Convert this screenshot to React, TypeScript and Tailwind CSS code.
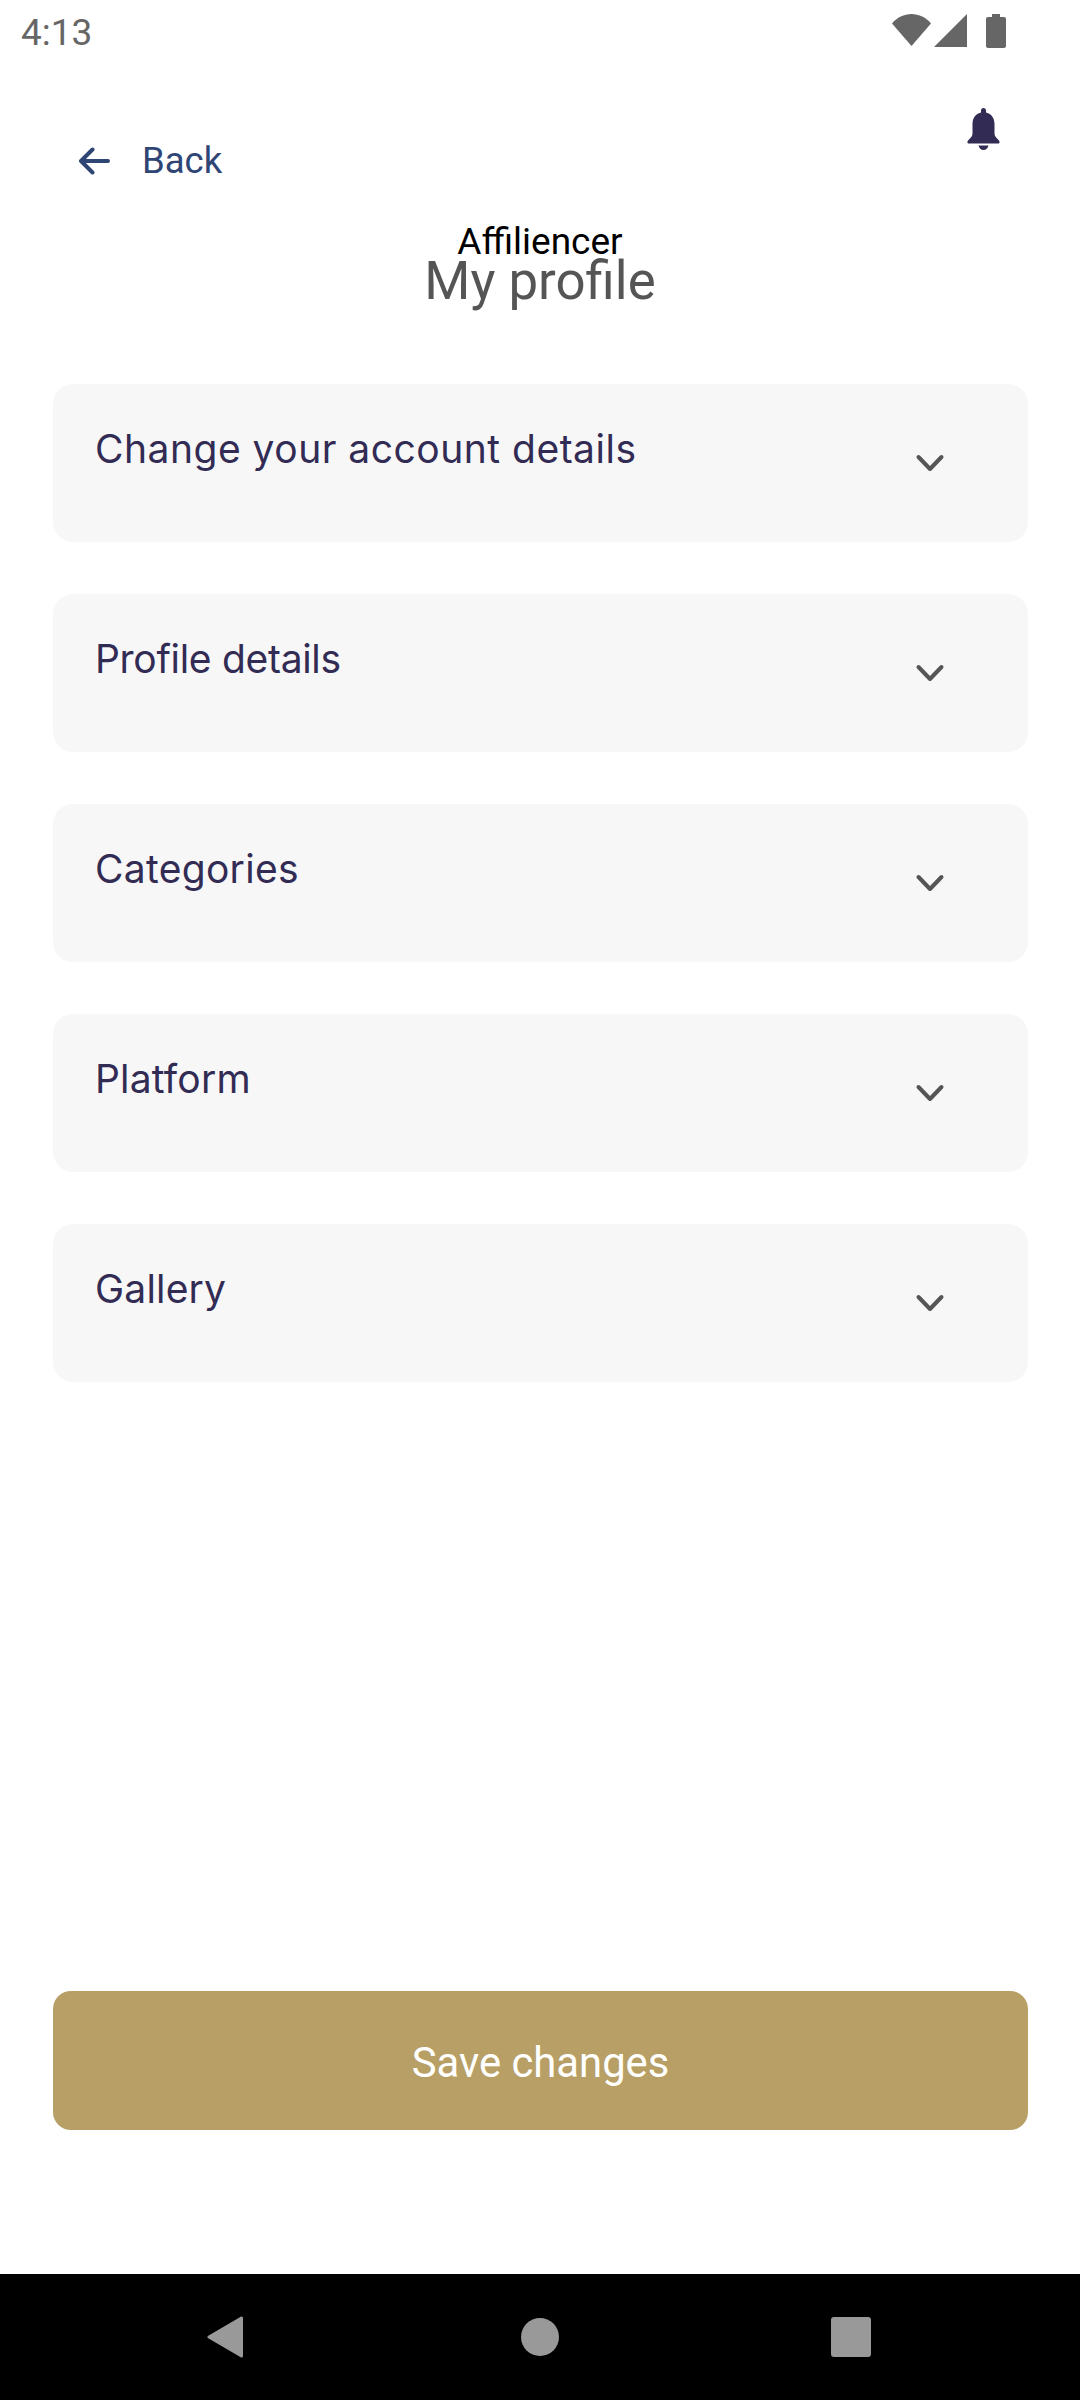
import React from 'react';

const sections = [
    { title: 'Change your account details', spacing: 'tracking-[0.5px]' },
    { title: 'Profile details', spacing: 'tracking-[-0.3px]' },
    { title: 'Categories', spacing: 'tracking-[0.3px]' },
    { title: 'Platform', spacing: 'tracking-[0.2px]' },
    { title: 'Gallery', spacing: 'tracking-[0.2px]' }
];

const App: React.FC = () => {
    return (
        <div className="flex flex-col h-[2400px] w-[1080px] bg-white font-['Roboto',sans-serif]">
            {/* status bar */}
            <div className="flex justify-between h-[64px] pl-[21px] pr-[74px]">
                <span className="mt-[12px] text-[37px] leading-[42px] text-[#666666]">4:13</span>
                <div className="flex items-start pt-[14px]">
                    <svg width="39" height="32" viewBox="0 0 39 32" fill="#666666">
                        <path d="M0 9.500C5 3.500 12 0 19.500 0S34 3.500 39 9.500L19.500 32Z" />
                    </svg>
                    <svg className="ml-[3px]" width="33" height="33" viewBox="0 0 33 33" fill="#666666">
                        <path d="M33 0V33H0Z" />
                    </svg>
                    <svg className="ml-[19px]" width="20" height="34" viewBox="0 0 20 34" fill="#666666">
                        <path d="M6 0H14V3H18C19.100 3 20 3.900 20 5V32C20 33.100 19.100 34 18 34H2C.9 34 0 33.100 0 32V5C0 3.900 .9 3 2 3H6Z" />
                    </svg>
                </div>
            </div>

            {/* back + bell */}
            <div className="flex justify-between items-start pl-[78px] pr-[80px]">
                <div className="flex items-center mt-[76px] text-[#2f4575]">
                    <svg width="33" height="28" viewBox="0 0 33 28" fill="none" stroke="#2f4575" strokeWidth="4" strokeLinecap="round" strokeLinejoin="round">
                        <path d="M30 14H3M14.500 2.500 3 14 14.500 25.500" />
                    </svg>
                    <span className="ml-[31px] text-[36.500px] leading-[42px]">Back</span>
                </div>
                <svg className="mt-[44px]" width="33" height="42" viewBox="0 0 33 42" fill="#322b54">
                    <path d="M16.500 0C18 0 19 1.100 19 2.500V4.500C24.800 5.800 27.500 10.500 27.500 16V25.500C27.500 28 29 29.500 31.500 32C33 33.500 33 35.500 31 35.500H2C0 35.500 0 33.500 1.500 32C4 29.500 5.500 28 5.500 25.500V16C5.500 10.500 8.200 5.800 14 4.500V2.500C14 1.100 15 0 16.500 0ZM11.500 37.500H21.500C21 40 19 42 16.500 42S12 40 11.500 37.500Z" />
                </svg>
            </div>

            {/* title */}
            <div className="flex flex-col items-center mt-[39px]">
                <span className="text-[37px] leading-[42px] text-black">Affiliencer</span>
                <span className="text-[52.800px] leading-[62px] mt-[-13px] text-[#555555]">My profile</span>
            </div>

            {/* accordion */}
            <div className="flex flex-col gap-[52px] mt-[72px] ml-[53px] mr-[52px]">
                {sections.map((s) => (
                    <div key={s.title} className="flex justify-between h-[158px] rounded-[20px] bg-[#f7f7f7] pl-[42px] pr-[83px]">
                        <span className={`mt-[42px] text-[39px] leading-[46px] text-[#322b54] font-['Inter',sans-serif] ${s.spacing}`}>{s.title}</span>
                        <svg className="mt-[70px]" width="30" height="18" viewBox="0 0 30 18" fill="none" stroke="#555555" strokeWidth="4" strokeLinecap="round" strokeLinejoin="round">
                            <path d="M3.500 3 15 15 26.500 3" />
                        </svg>
                    </div>
                ))}
            </div>

            <div className="flex-1" />

            {/* save */}
            <button className="ml-[53px] mr-[52px] mb-[144px] h-[139px] rounded-[18px] bg-[#b89f65] text-white text-[41.800px] leading-[50px] pt-[4px]">
                Save changes
            </button>

            {/* nav bar */}
            <div className="flex items-center pl-[207px] h-[126px] bg-black">
                <svg width="37" height="42" viewBox="0 0 37 42" fill="#999999" stroke="#999999" strokeWidth="3" strokeLinejoin="round">
                    <path d="M34.500 2V40L2 21Z" />
                </svg>
                <div className="ml-[277px] w-[38px] h-[38px] rounded-full bg-[#999999]" />
                <div className="ml-[272px] w-[40px] h-[40px] rounded-[3px] bg-[#999999]" />
            </div>
        </div>
    );
};

export default App;
